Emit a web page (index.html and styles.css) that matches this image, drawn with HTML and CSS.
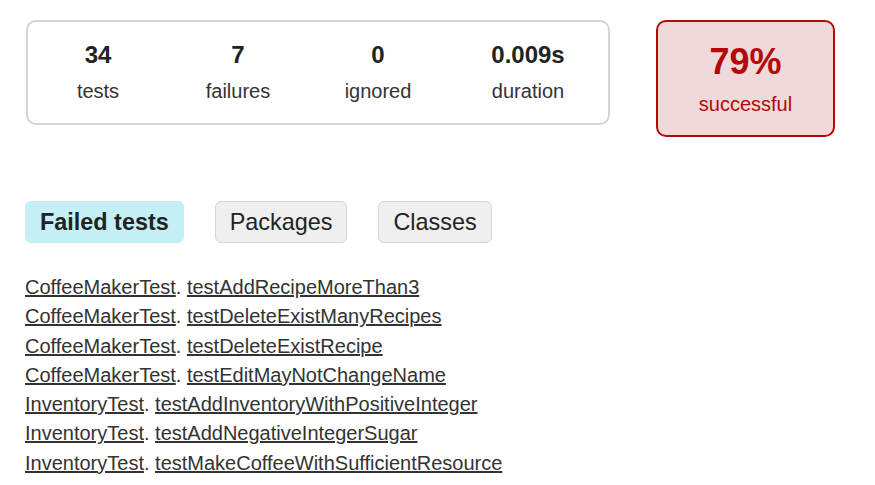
FILE: index.html
```html
<!DOCTYPE html>
<html>
<head>
<meta charset="utf-8">
<title>Test Summary</title>
<link rel="stylesheet" href="styles.css">
</head>
<body>
<div class="page">
  <div class="summary">
    <div class="stats">
      <div class="stat"><div class="counter">34</div><div class="label">tests</div></div>
      <div class="stat"><div class="counter">7</div><div class="label">failures</div></div>
      <div class="stat"><div class="counter">0</div><div class="label">ignored</div></div>
      <div class="stat stat-last"><div class="counter">0.009s</div><div class="label">duration</div></div>
    </div>
    <div class="success">
      <div class="percent">79%</div>
      <div class="success-label">successful</div>
    </div>
  </div>

  <div class="tabs">
    <a class="tab tab-active">Failed tests</a>
    <a class="tab">Packages</a>
    <a class="tab">Classes</a>
  </div>

  <ul class="failures">
    <li><a href="#">CoffeeMakerTest</a>. <a href="#">testAddRecipeMoreThan3</a></li>
    <li><a href="#">CoffeeMakerTest</a>. <a href="#">testDeleteExistManyRecipes</a></li>
    <li><a href="#">CoffeeMakerTest</a>. <a href="#">testDeleteExistRecipe</a></li>
    <li><a href="#">CoffeeMakerTest</a>. <a href="#">testEditMayNotChangeName</a></li>
    <li><a href="#">InventoryTest</a>. <a href="#">testAddInventoryWithPositiveInteger</a></li>
    <li><a href="#">InventoryTest</a>. <a href="#">testAddNegativeIntegerSugar</a></li>
    <li><a href="#">InventoryTest</a>. <a href="#">testMakeCoffeeWithSufficientResource</a></li>
  </ul>
</div>
</body>
</html>
```
FILE: styles.css
```css
html, body {
  margin: 0;
  padding: 0;
  background: #ffffff;
}
body {
  font-family: "Liberation Sans", Arial, sans-serif;
  color: #333333;
}
.page {
  padding: 20px 0 0 25px;
}
.summary {
  display: flex;
  align-items: flex-start;
}
.stats {
  display: flex;
  width: 580px;
  height: 101px;
  border: 2px solid #d4d4d4;
  border-radius: 10px;
  margin-left: 1px;
}
.stat {
  width: 140px;
  text-align: center;
  padding-top: 19px;
}
.stat-last {
  flex: 1;
}
.counter {
  font-size: 24px;
  font-weight: bold;
  line-height: 28px;
  color: #222222;
}
.label {
  font-size: 20px;
  line-height: 24px;
  margin-top: 10px;
  color: #333333;
}
.success {
  width: 175px;
  height: 113px;
  margin-left: 46px;
  border: 2px solid #b60808;
  border-radius: 10px;
  background: #efd9da;
  text-align: center;
  color: #b60808;
  box-sizing: content-box;
}
.percent {
  font-size: 36px;
  font-weight: bold;
  line-height: 40px;
  margin-top: 20px;
}
.success-label {
  font-size: 20px;
  line-height: 24px;
  margin-top: 10px;
}
.tabs {
  display: flex;
  gap: 31px;
  margin-top: 64px;
}
.tab {
  display: block;
  font-size: 23.4px;
  line-height: 28px;
  padding: 6px 14px 6px 14px;
  border: 1px solid #d6d6d6;
  border-radius: 6px;
  background: #efefef;
  color: #222222;
  text-decoration: none;
}
.tab-active {
  font-weight: bold;
  background: #c4eff5;
  border-color: #c4eff5;
}
.failures {
  list-style: none;
  margin: 30px 0 0 0;
  padding: 0;
  font-size: 20px;
  line-height: 29.3px;
}
.failures li {
  margin: 0;
}
.failures a {
  color: #333333;
  text-decoration: underline;
}
```
